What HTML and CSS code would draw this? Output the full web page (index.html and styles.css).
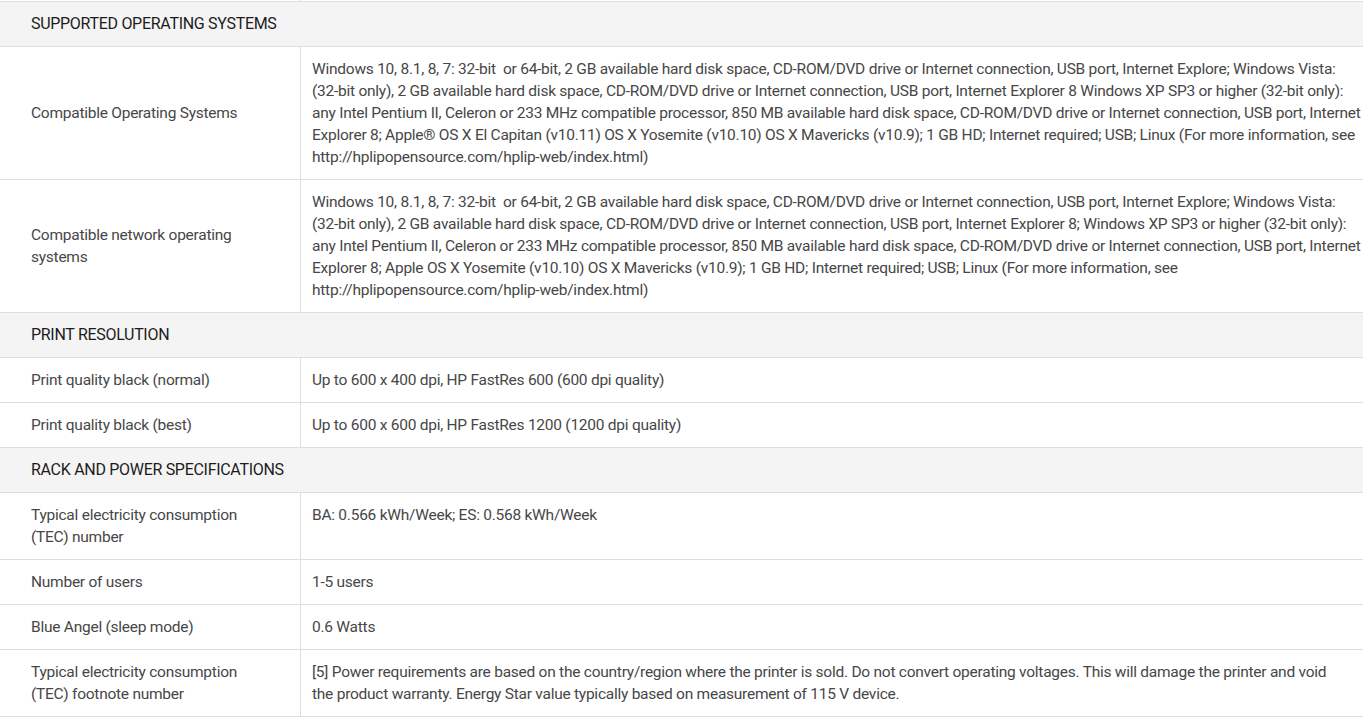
FILE: index.html
```html
<!DOCTYPE html>
<html lang="en">
<head>
<meta charset="utf-8">
<title>Specifications</title>
<link rel="stylesheet" href="styles.css">
</head>
<body>
<div class="specs">
  <div class="row cut"><div class="label"></div><div class="value"></div></div>

  <div class="section">SUPPORTED OPERATING SYSTEMS</div>
  <div class="row">
    <div class="label">Compatible Operating Systems</div>
    <div class="value">Windows 10, 8.1, 8, 7: 32-bit &nbsp;or 64-bit, 2 GB available hard disk space, CD-ROM/DVD drive or Internet connection, USB port, Internet Explore; Windows Vista:<br>(32-bit only), 2 GB available hard disk space, CD-ROM/DVD drive or Internet connection, USB port, Internet Explorer 8 Windows XP SP3 or higher (32-bit only):<br>any Intel Pentium II, Celeron or 233 MHz compatible processor, 850 MB available hard disk space, CD-ROM/DVD drive or Internet connection, USB port, Internet<br>Explorer 8; Apple® OS X El Capitan (v10.11) OS X Yosemite (v10.10) OS X Mavericks (v10.9); 1 GB HD; Internet required; USB; Linux (For more information, see<br>http://hplipopensource.com/hplip-web/index.html)</div>
  </div>
  <div class="row">
    <div class="label">Compatible network operating systems</div>
    <div class="value">Windows 10, 8.1, 8, 7: 32-bit &nbsp;or 64-bit, 2 GB available hard disk space, CD-ROM/DVD drive or Internet connection, USB port, Internet Explore; Windows Vista:<br>(32-bit only), 2 GB available hard disk space, CD-ROM/DVD drive or Internet connection, USB port, Internet Explorer 8; Windows XP SP3 or higher (32-bit only):<br>any Intel Pentium II, Celeron or 233 MHz compatible processor, 850 MB available hard disk space, CD-ROM/DVD drive or Internet connection, USB port, Internet<br>Explorer 8; Apple OS X Yosemite (v10.10) OS X Mavericks (v10.9); 1 GB HD; Internet required; USB; Linux (For more information, see<br>http://hplipopensource.com/hplip-web/index.html)</div>
  </div>

  <div class="section">PRINT RESOLUTION</div>
  <div class="row">
    <div class="label">Print quality black (normal)</div>
    <div class="value">Up to 600 x 400 dpi, HP FastRes 600 (600 dpi quality)</div>
  </div>
  <div class="row">
    <div class="label">Print quality black (best)</div>
    <div class="value">Up to 600 x 600 dpi, HP FastRes 1200 (1200 dpi quality)</div>
  </div>

  <div class="section">RACK AND POWER SPECIFICATIONS</div>
  <div class="row">
    <div class="label">Typical electricity consumption (TEC) number</div>
    <div class="value">BA: 0.566 kWh/Week; ES: 0.568 kWh/Week</div>
  </div>
  <div class="row">
    <div class="label">Number of users</div>
    <div class="value">1-5 users</div>
  </div>
  <div class="row">
    <div class="label">Blue Angel (sleep mode)</div>
    <div class="value">0.6 Watts</div>
  </div>
  <div class="row">
    <div class="label">Typical electricity consumption (TEC) footnote number</div>
    <div class="value">[5] Power requirements are based on the country/region where the printer is sold. Do not convert operating voltages. This will damage the printer and void<br>the product warranty. Energy Star value typically based on measurement of 115 V device.</div>
  </div>
</div>
</body>
</html>
```
FILE: styles.css
```css
* { box-sizing: border-box; }

html, body {
  margin: 0;
  padding: 0;
  background: #ffffff;
}

.specs {
  width: 1363px;
  font-family: Roboto, "Liberation Sans", sans-serif;
  font-size: 15.5px;
  letter-spacing: -0.25px;
  line-height: 22px;
  color: #474747;
}

.row {
  display: grid;
  grid-template-columns: 301px 1fr;
  border-bottom: 1px solid #dedede;
}

.row.cut {
  height: 2px;
}

.label {
  display: flex;
  align-items: center;
  padding: 11px 45px 11px 31px;
  border-right: 1px solid #dedede;
}

.row.cut .label,
.row.cut .value {
  padding: 0;
}

.value {
  padding: 11px 6px 11px 11px;
  white-space: nowrap;
}

.section {
  background: #f4f4f4;
  color: #1c1c1c;
  font-size: 16px;
  letter-spacing: -0.3px;
  padding: 11px 31px;
  border-bottom: 1px solid #dedede;
}
```
